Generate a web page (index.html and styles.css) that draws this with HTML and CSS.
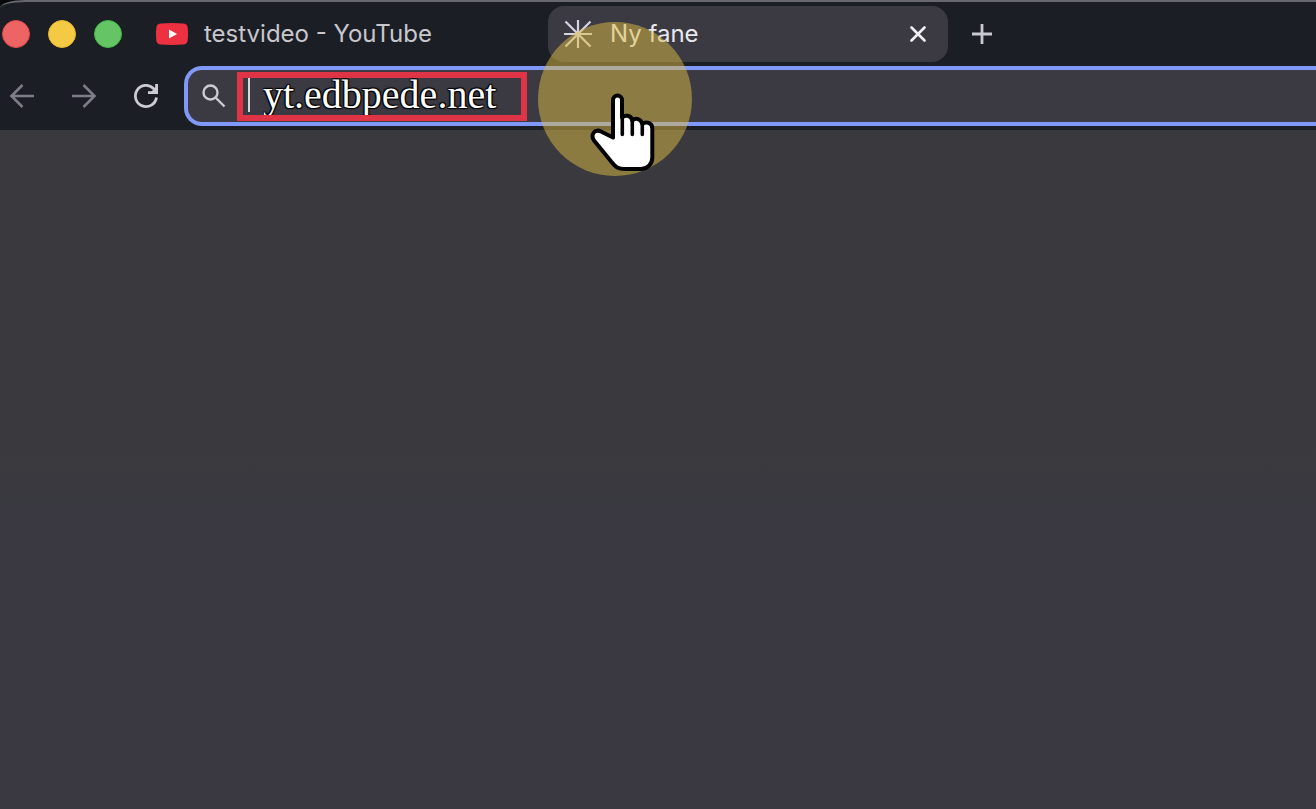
FILE: index.html
```html
<!DOCTYPE html>
<html lang="da">
<head>
<meta charset="utf-8">
<title>Ny fane</title>
<link rel="stylesheet" href="styles.css">
</head>
<body>
<div class="top">
<header class="chrome">
  <div class="tabstrip">
    <div class="lights">
      <button class="light red" aria-label="Luk vindue"></button>
      <button class="light yellow" aria-label="Minimer"></button>
      <button class="light green" aria-label="Maksimer"></button>
    </div>
    <button class="tab inactive">
      <svg width="32" height="22" viewBox="0 0 32 22"><path d="M5 .4Q16-.4 27 .4 31 .6 31.600 4 32.400 11 31.600 18 31 21.400 27 21.600 16 22.400 5 21.600 1 21.400.4 18-.4 11 .4 4 1 .6 5 .4z" fill="#ee3140"/><path d="M13 6.500v9l8-4.500z" fill="#fff"/></svg>
      <span>testvideo - YouTube</span>
    </button>
    <div class="tab active">
      <svg width="28" height="28" viewBox="0 0 28 28" fill="none" stroke="#d6d4e2" stroke-width="2.200"><path d="M14 0v28M0 14h28M1.500 1.500l25 25M26.500 1.500l-25 25"/></svg>
      <span class="title">Ny fane</span>
      <button class="icon close" aria-label="Luk fane"><svg width="16" height="16" viewBox="0 0 16 16" fill="none" stroke="#efeff4" stroke-width="2.600" stroke-linecap="round"><path d="M1.500 1.500l13 13M14.500 1.500l-13 13"/></svg></button>
    </div>
    <button class="icon add" aria-label="Ny fane"><svg width="20" height="20" viewBox="0 0 20 20" fill="none" stroke="#c9c9d0" stroke-width="2.800"><path d="M10 0v20M0 10h20"/></svg></button>
  </div>
  <div class="toolbar">
    <nav class="nav">
      <button class="icon" aria-label="Tilbage"><svg width="28" height="28" viewBox="0 0 28 28" fill="none" stroke="#7e7c86" stroke-width="2.600"><path d="M26 14H4M14.500 3L3.500 14l11 11"/></svg></button>
      <button class="icon" aria-label="Frem"><svg width="28" height="28" viewBox="0 0 28 28" fill="none" stroke="#7e7c86" stroke-width="2.600"><path d="M2 14h22M13.500 3l11 11-11 11"/></svg></button>
      <button class="icon" aria-label="Genindlæs"><svg width="28" height="28" viewBox="0 0 28 28" fill="none" stroke="#cdccd3" stroke-width="2.800"><path d="M24.500 15.500A10.600 10.600 0 1 1 21.500 6.500L24 9"/><path d="M24.600 2v8.600H16"/><path d="M18.500 10.500h6V4.500z" fill="#cdccd3" stroke="none"/></svg></button>
    </nav>
    <div class="omnibox">
      <svg width="24" height="24" viewBox="0 0 24 24" fill="none" stroke="#cccbd2" stroke-width="2.400"><circle cx="8.500" cy="8.500" r="7"/><path d="M13.500 13.500l9 9"/></svg>
      <label class="address">
        <span class="caret"></span>
        <input type="text" value="yt.edbpede.net" aria-label="Adresse">
      </label>
    </div>
  </div>
</header>
</div>
<main class="page"></main>
<div class="spot"></div>
<svg class="hand" width="70" height="84" viewBox="0 0 70 84" fill="#fff" stroke="#000" stroke-width="4" stroke-linecap="round" stroke-linejoin="round"><path d="M25 47.500V10a4.500 4.500 0 0 1 9 0V27.500C37 24.500 43 25 44.300 30.500 47.500 27.500 53 28.500 54.300 34 58 31 64.300 32.500 64.300 38.500V67.500C64.300 74 59.500 79 53 79H37C30 79 27.500 77 24 72.500L6 50.500C2 44.500 7 38.500 13 41.500z"/><path d="M34.300 27v17.500M44.300 30.500v14M54.300 34v10.500" stroke-width="3.600"/></svg>
</body>
</html>
```
FILE: styles.css
```css
* { box-sizing: border-box; }
body {
  margin: 0;
  min-height: 100vh;
  display: flex;
  flex-direction: column;
  overflow: hidden;
  background: #3a3a42;
  font-family: Inter, "Liberation Sans", sans-serif;
}
button {
  border: 0;
  padding: 0;
  background: none;
  font: inherit;
  color: inherit;
}
svg { display: block; flex: none; }
.top { background: #08080b; }
.chrome {
  background: #1c1e26;
  border-top: 2px solid #66686e;
  border-top-left-radius: 26px 8px;
  padding: 4px 0;
}
.tabstrip {
  display: flex;
  align-items: center;
  padding-left: 2px;
  height: 56px;
}
.lights { display: flex; gap: 18px; margin-right: 34px; }
.light { width: 28px; height: 28px; border-radius: 50%; }
.red { background: #ee6464; border: 1px solid #e74848; }
.yellow { background: #f4ca44; border: 1px solid #e8b52d; }
.green { background: #65c565; border: 1px solid #41b846; }
.tab {
  display: flex;
  align-items: center;
  font-size: 24px;
  line-height: 32px;
}
.inactive { width: 392px; gap: 16px; color: #c8c7cd; }
.active {
  width: 400px;
  height: 56px;
  gap: 18px;
  padding: 0 18px 0 16px;
  border-radius: 16px;
  background: #3b3a42;
  color: #e9e8ee;
}
.title { flex: 1; }
.icon { display: grid; place-items: center; }
.close { width: 24px; height: 24px; }
.add { width: 68px; height: 56px; }
.toolbar {
  display: flex;
  align-items: center;
  padding-top: 4px;
}
.nav { display: flex; gap: 34px; padding: 0 24px 0 8px; }
.omnibox {
  flex: 1;
  min-width: 0;
  height: 60px;
  display: flex;
  align-items: center;
  gap: 11px;
  padding-left: 14px;
  border: 4px solid #8098f8;
  border-right: 0;
  border-radius: 18px 0 0 18px;
  background: #3b3a42;
}
.address {
  display: flex;
  align-items: flex-start;
  width: 290px;
  height: 49px;
  border: 6px solid #df3346;
  padding-left: 5px;
  gap: 13px;
}
.caret { width: 2px; height: 34px; background: #d8d8de; flex: none; }
.address input {
  flex: 1;
  min-width: 0;
  height: 37px;
  border: 0;
  padding: 0 0 4px;
  outline: 0;
  background: none;
  color: #fff;
  font: 40px/33px "Liberation Serif", serif;
  text-shadow: 1px 1px 1px #000, -1px -1px 1px #000, 1px -1px 1px #000, -1px 1px 1px #000;
}
.page {
  flex: 1;
  background: linear-gradient(#3a3a3e 0%, #3a3a3e 45%, #3a3942 60%, #3a3942 100%);
}
.spot {
  position: absolute;
  left: 538px;
  top: 22px;
  width: 154px;
  height: 154px;
  border-radius: 50%;
  background: rgba(222, 188, 66, 0.5);
}
.hand { position: absolute; left: 588px; top: 90px; }
```
